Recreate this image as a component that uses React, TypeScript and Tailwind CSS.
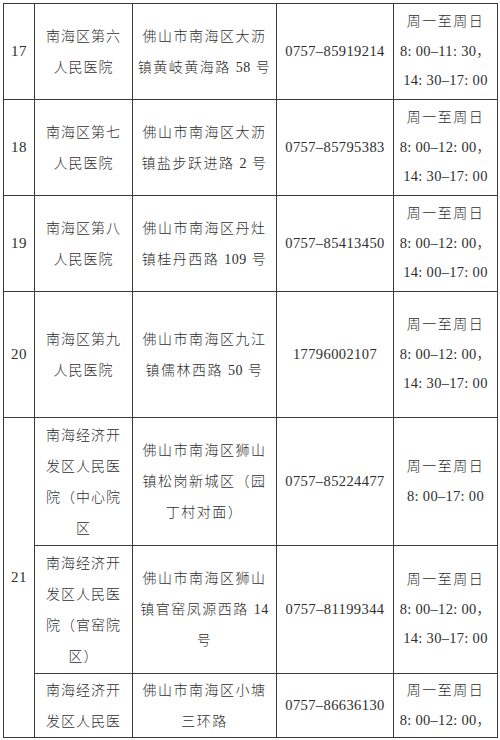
import React from "react";

type Row = {
  name: React.ReactNode[];
  addr: React.ReactNode[];
  phone: string;
  hours: string[];
  h: string;
};

const N = ({ children }: { children: React.ReactNode }) => (
  <span className="tracking-[0.5px]">{children}</span>
);

const rows: { num: string; sub: Row[] }[] = [
  {
    num: "17",
    sub: [
      {
        name: ["南海区第六", "人民医院"],
        addr: ["佛山市南海区大沥", <>镇黄岐黄海路 <N>58</N> 号</>],
        phone: "0757–85919214",
        hours: ["周一至周日", "8: 00–11: 30，", "14: 30–17: 00"],
        h: "h-[96px]",
      },
    ],
  },
  {
    num: "18",
    sub: [
      {
        name: ["南海区第七", "人民医院"],
        addr: ["佛山市南海区大沥", <>镇盐步跃进路 <N>2</N> 号</>],
        phone: "0757–85795383",
        hours: ["周一至周日", "8: 00–12: 00，", "14: 30–17: 00"],
        h: "h-[96px]",
      },
    ],
  },
  {
    num: "19",
    sub: [
      {
        name: ["南海区第八", "人民医院"],
        addr: ["佛山市南海区丹灶", <>镇桂丹西路 <N>109</N> 号</>],
        phone: "0757–85413450",
        hours: ["周一至周日", "8: 00–12: 00，", "14: 00–17: 00"],
        h: "h-[96px]",
      },
    ],
  },
  {
    num: "20",
    sub: [
      {
        name: ["南海区第九", "人民医院"],
        addr: ["佛山市南海区九江", <>镇儒林西路 <N>50</N> 号</>],
        phone: "17796002107",
        hours: ["周一至周日", "8: 00–12: 00，", "14: 30–17: 00"],
        h: "h-[126px]",
      },
    ],
  },
  {
    num: "21",
    sub: [
      {
        name: ["南海经济开", "发区人民医", "院（中心院", "区"],
        addr: ["佛山市南海区狮山", "镇松岗新城区（园", "丁村对面）"],
        phone: "0757–85224477",
        hours: ["周一至周日", "8: 00–17: 00"],
        h: "h-[128px]",
      },
      {
        name: ["南海经济开", "发区人民医", "院（官窑院", "区）"],
        addr: ["佛山市南海区狮山", <>镇官窑凤源西路 <N>14</N></>, "号"],
        phone: "0757–81199344",
        hours: ["周一至周日", "8: 00–12: 00，", "14: 30–17: 00"],
        h: "h-[128px]",
      },
      {
        name: ["南海经济开", "发区人民医"],
        addr: ["佛山市南海区小塘", "三环路"],
        phone: "0757–86636130",
        hours: ["周一至周日", "8: 00–12: 00，"],
        h: "h-[64px]",
      },
    ],
  },
];

const cell =
  "border border-[#3a3a3a] text-center align-middle whitespace-nowrap p-0";

export default function App() {
  return (
    <div
      className="bg-white w-[500px] h-[740px] overflow-hidden pt-[3px] pl-[3px] text-[#2e2e2e] font-light"
      style={{ fontFamily: '"Liberation Serif", "Noto Sans CJK SC", serif' }}
    >
      <table className="table-fixed border-collapse w-[494px] text-[14px]">
        <colgroup>
          <col className="w-[31px]" />
          <col className="w-[98px]" />
          <col className="w-[144px]" />
          <col className="w-[117px]" />
          <col className="w-[104px]" />
        </colgroup>
        <tbody>
          {rows.flatMap((r) =>
            r.sub.map((s, i) => (
              <tr key={r.num + "-" + i} className={s.h}>
                {i === 0 && (
                  <td
                    rowSpan={r.sub.length}
                    className={cell + " text-[15px] tracking-[0.5px]"}
                  >
                    {r.num}
                  </td>
                )}
                <td className={cell + " leading-[31px] tracking-[1px]"}>
                  {s.name.map((l, k) => (
                    <div key={k}>{l}</div>
                  ))}
                </td>
                <td className={cell + " leading-[31px] tracking-[1.5px]"}>
                  {s.addr.map((l, k) => (
                    <div key={k}>{l}</div>
                  ))}
                </td>
                <td className={cell + " text-[14.5px] tracking-[0.4px]"}>
                  {s.phone}
                </td>
                <td className={cell + " leading-[29.5px]"}>
                  {s.hours.map((l, k) => (
                    <div
                      key={k}
                      className={
                        k === 0
                          ? "tracking-[1.5px]"
                          : "text-[14.5px] tracking-[0.3px]"
                      }
                    >
                      {l}
                    </div>
                  ))}
                </td>
              </tr>
            ))
          )}
        </tbody>
      </table>
    </div>
  );
}
